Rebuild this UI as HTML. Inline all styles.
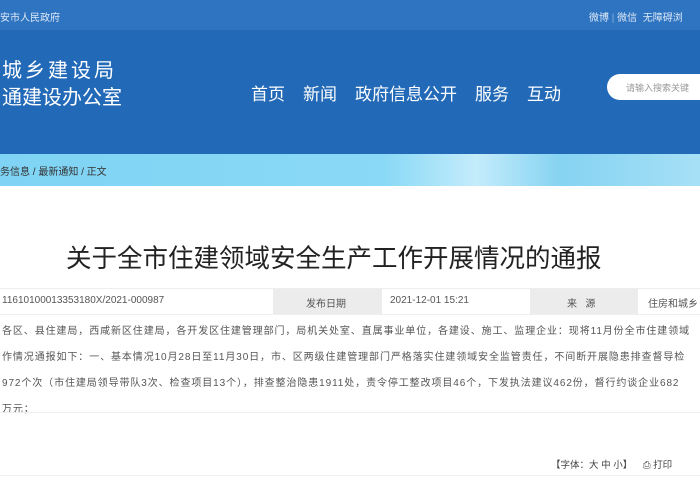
<!DOCTYPE html>
<html><head><meta charset="utf-8"><style>
body{margin:0;width:700px;height:490px;overflow:hidden;background:#fff;font-family:"Liberation Sans","Noto Sans CJK SC",sans-serif;position:relative}
.a{position:absolute;white-space:nowrap}
.n span{margin-right:18px}
</style></head><body>
<div class="a" style="left:0;top:0;width:700px;height:30px;background:#2f74c1"></div>
<div class="a" style="left:0;top:30px;width:700px;height:124px;background:#2269b7"></div>
<div class="a" style="left:0;top:154px;width:700px;height:32px;background:linear-gradient(90deg,#7fd3f4,#8ad9f6 55%,#c4ecfb 68%,#86d3f2 80%,#a6e0f6)"></div>
<div class="a" style="left:0;top:9px;font-size:10px;color:#dbe8f6">安市人民政府</div>
<div class="a" style="left:589px;top:9px;font-size:10px;color:#dbe8f6">微博 <span style="color:#8ab2dd">|</span> 微信 &nbsp;无障碍浏</div>
<div class="a" style="left:2px;top:58px;font-size:20px;color:#fff;line-height:27px"><span style="letter-spacing:3px">城乡建设局</span><br>通建设办公室</div>
<div class="a n" style="left:251px;top:80px;font-size:17px;color:#fff"><span>首页</span><span>新闻</span><span>政府信息公开</span><span>服务</span><span>互动</span></div>
<div class="a" style="left:607px;top:74px;width:110px;height:26px;background:#fff;border-radius:13px"></div>
<div class="a" style="left:626px;top:81px;font-size:9px;color:#999">请输入搜索关键</div>
<div class="a" style="left:0;top:163px;font-size:10px;color:#333">务信息 / 最新通知 / 正文</div>
<div class="a" style="left:66px;top:238px;font-size:25.5px;color:#222">关于全市住建领域安全生产工作开展情况的通报</div>
<div class="a" style="left:0;top:288px;width:700px;height:25px;border-top:1px solid #eee;border-bottom:1px solid #eee"></div>
<div class="a" style="left:273px;top:289px;width:109px;height:25px;background:#ececec"></div>
<div class="a" style="left:530px;top:289px;width:108px;height:25px;background:#ececec"></div>
<div class="a" style="left:2px;top:295px;font-size:10px;color:#555">11610100013353180X/2021-000987</div>
<div class="a" style="left:306px;top:295px;font-size:10px;color:#555">发布日期</div>
<div class="a" style="left:390px;top:295px;font-size:10px;color:#555">2021-12-01 15:21</div>
<div class="a" style="left:567px;top:295px;font-size:10px;color:#555">来 &nbsp; 源</div>
<div class="a" style="left:648px;top:295px;font-size:10px;color:#555">住房和城乡</div>
<div class="a" style="left:2px;top:319px;font-size:10px;color:#555;line-height:26px;letter-spacing:0.9px">各区、县住建局，西咸新区住建局，各开发区住建管理部门，局机关处室、直属事业单位，各建设、施工、监理企业：现将11月份全市住建领域<br>作情况通报如下：一、基本情况10月28日至11月30日，市、区两级住建管理部门严格落实住建领域安全监管责任，不间断开展隐患排查督导检<br>972个次（市住建局领导带队3次、检查项目13个），排查整治隐患1911处，责令停工整改项目46个，下发执法建议462份，督行约谈企业682<br>万元；</div>
<div class="a" style="left:0;top:412px;width:700px;height:1px;background:#eee"></div>
<div class="a" style="left:551px;top:457px;font-size:9.5px;color:#444">【字体：大 中 小】 &nbsp;&nbsp;&nbsp;⎙ 打印</div>
<div class="a" style="left:0;top:475px;width:700px;height:1px;background:#f0f0f0"></div>
</body></html>
